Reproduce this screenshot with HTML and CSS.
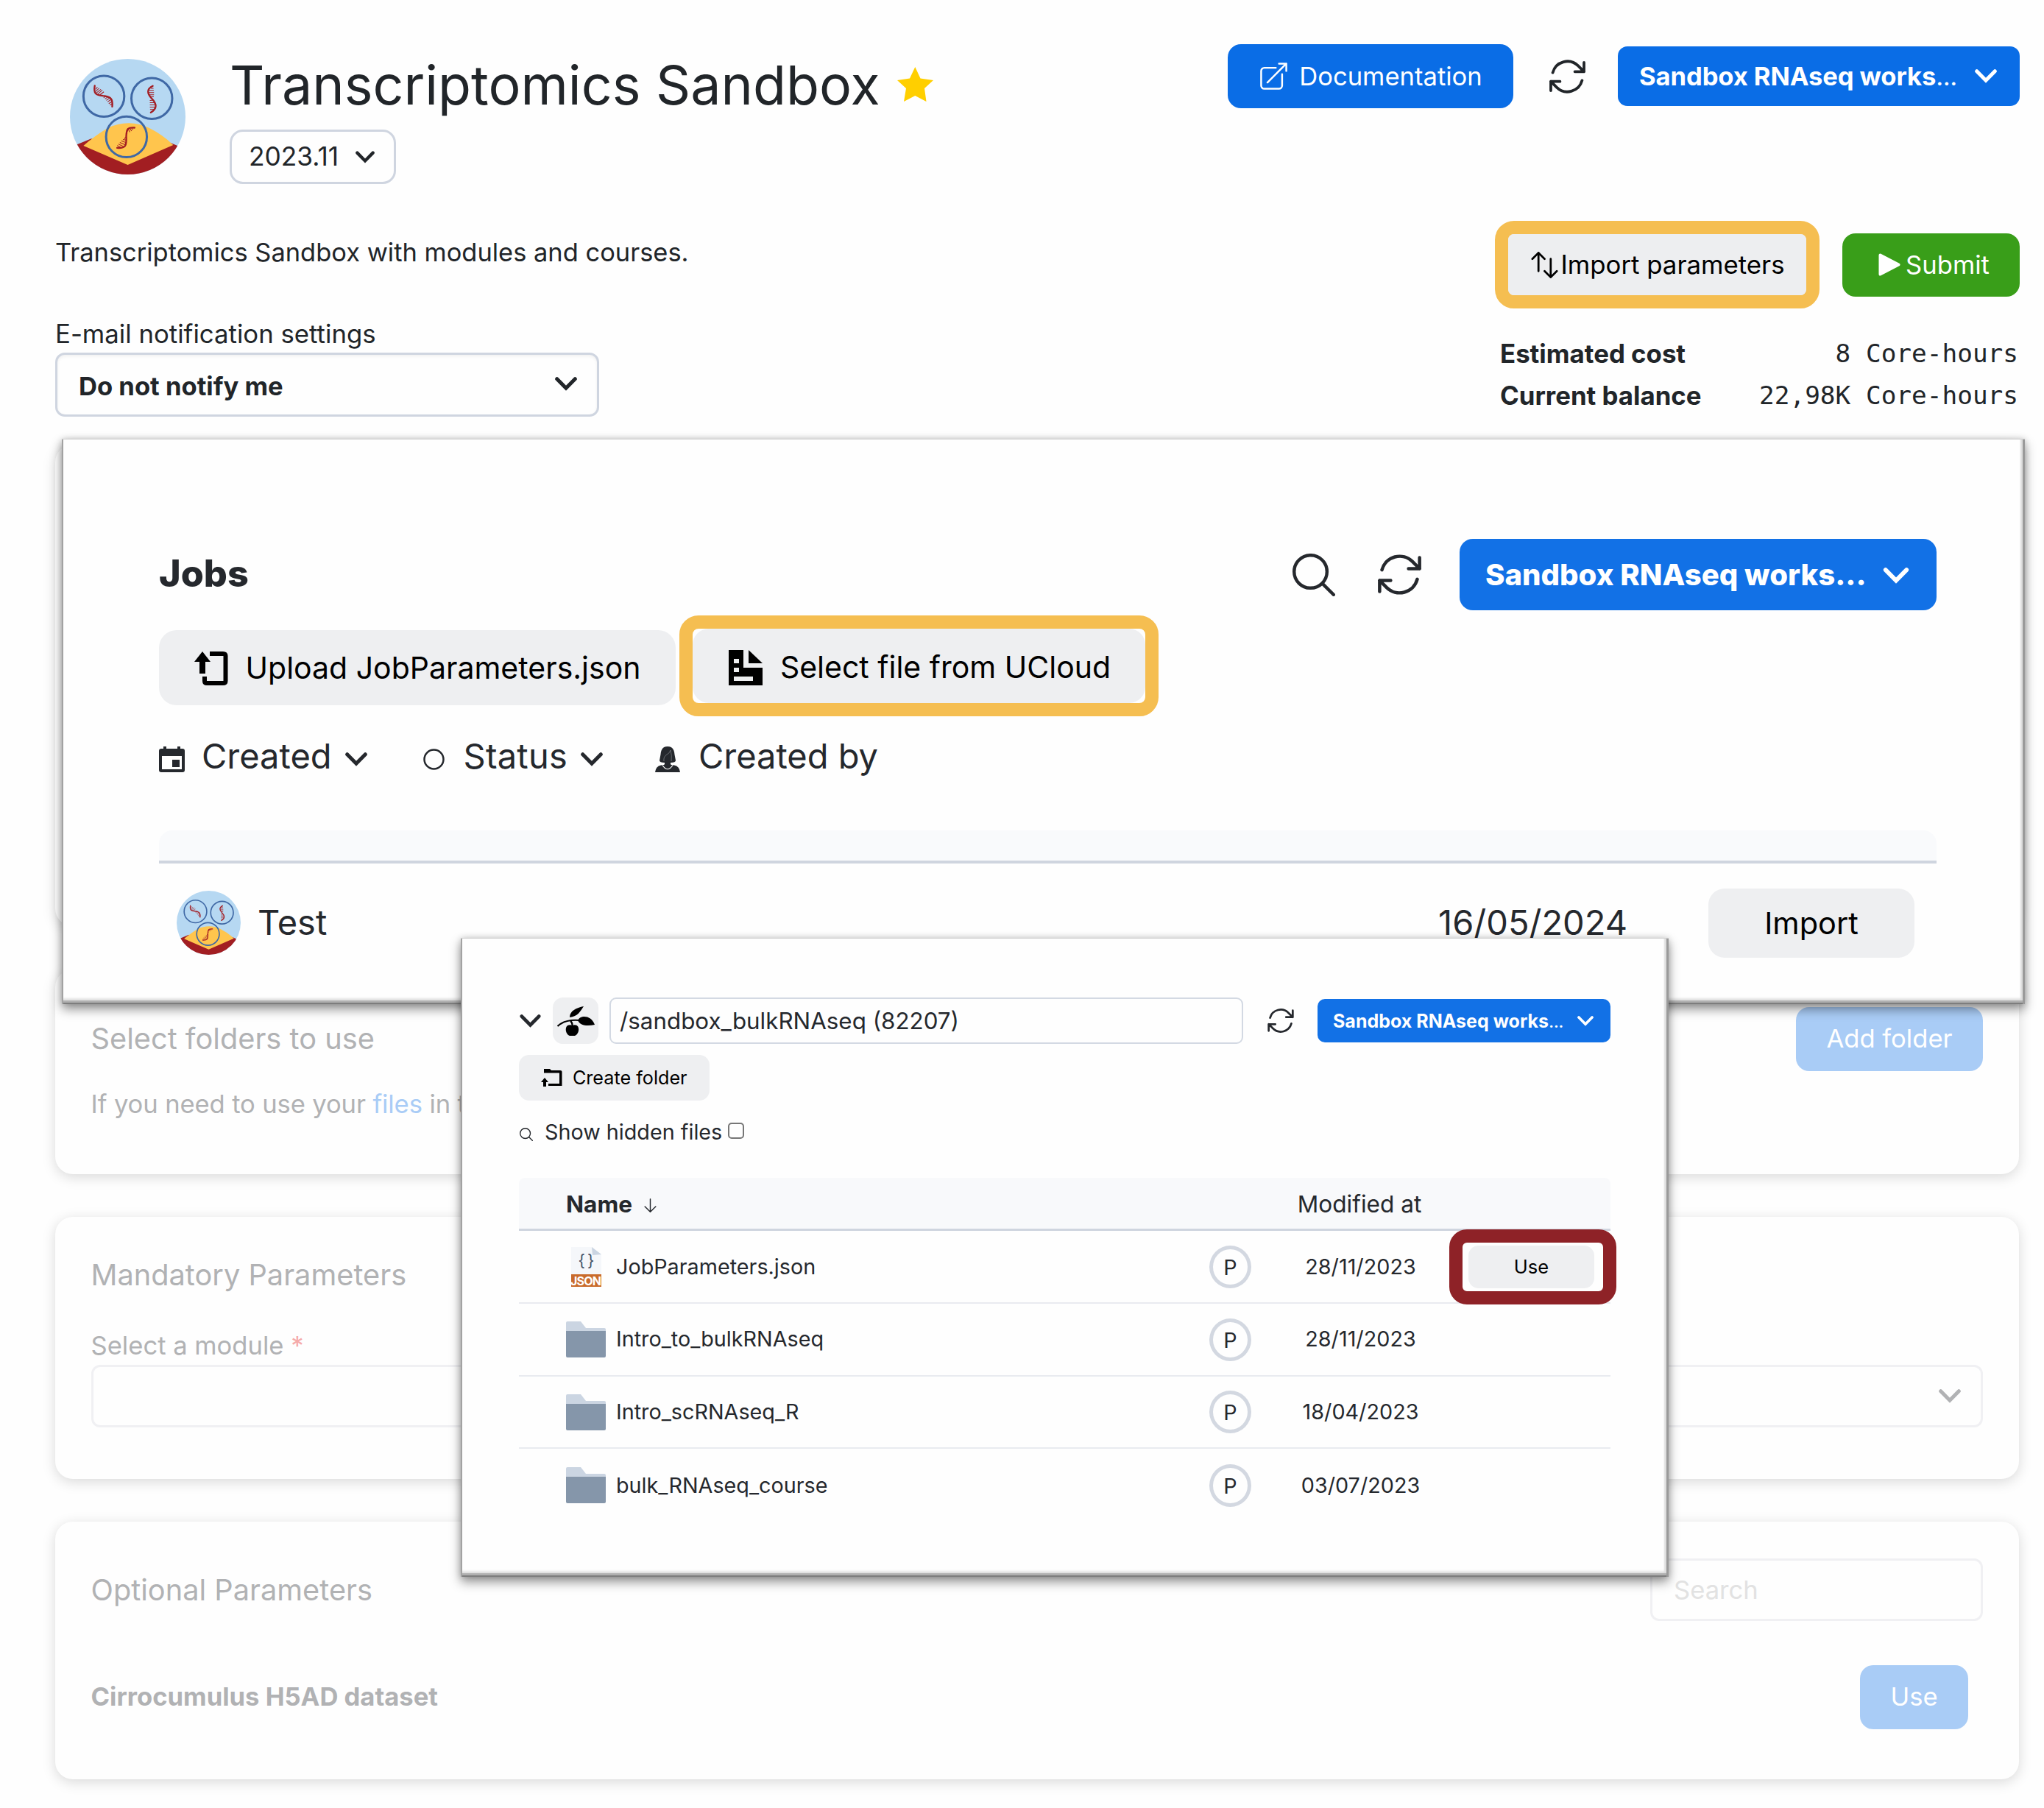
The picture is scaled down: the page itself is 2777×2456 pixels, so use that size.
FILE: index.html
```html
<!DOCTYPE html>
<html lang="en">
<head>
<meta charset="utf-8">
<title>Transcriptomics Sandbox</title>
<link rel="stylesheet" href="styles.css">
</head>
<body>
<svg class="defs" width="0" height="0" aria-hidden="true">
  <symbol id="refresh" viewBox="2.2 2.9 19.6 18.2"><path fill="none" stroke="currentColor" stroke-width="1.5" stroke-linecap="round" stroke-linejoin="round" d="M16.023 9.348h4.992v-.001M2.985 19.644v-4.992m0 0h4.992m-4.993 0l3.181 3.183a8.25 8.25 0 0013.803-3.7M4.031 9.865a8.25 8.25 0 0113.803-3.7l3.181 3.182m0-4.991v4.99"/></symbol>
  <symbol id="search" viewBox="2.25 2.25 19.5 19.5"><path fill="none" stroke="currentColor" stroke-width="1.5" stroke-linecap="round" stroke-linejoin="round" d="M21 21l-5.197-5.197m0 0A7.5 7.5 0 105.196 5.196a7.5 7.5 0 0010.607 10.607z"/></symbol>
  <symbol id="chevron" viewBox="0 0 30 19"><path fill="none" stroke="currentColor" stroke-width="5" stroke-linecap="round" d="M2.7 2.7L15 15.2L27.3 2.7"/></symbol>
  <symbol id="folder" viewBox="0 0 54 49"><path fill="#cbd5e2" d="M0 2Q0 0 2 0H20L27 9H52Q54 9 54 11V16H0Z"/><path fill="#8596aa" d="M0 13H54V47Q54 49 52 49H2Q0 49 0 47Z"/></symbol>
  <symbol id="logo" viewBox="46 30 470 470">
    <clipPath id="disc"><circle cx="281" cy="265" r="235"/></clipPath>
    <g clip-path="url(#disc)">
      <path fill="#b6d8f2" d="M46 30H516V500H46Z"/>
      <path fill="#a21e22" d="M46 390L133 354L281 330L455 371L516 397V500H46Z"/>
      <path fill="#b6d8f2" d="M133 354L200 300H370L455 371L281 380Z"/>
      <path fill="#ffc54d" d="M101 383Q145 345 200 311Q240 291 285 291Q330 291 368 311Q425 340 466 380L281 461Z"/>
    </g>
    <g fill="none" stroke="#3f68a5" stroke-width="9"><circle cx="184" cy="182" r="83"/><circle cx="379" cy="191" r="83"/><circle cx="276" cy="347" r="83"/></g>
    <g fill="none" stroke="#a31d23" stroke-width="7" stroke-linecap="round"><path d="M147 139C141 172 152 177 180 180C208 182 222 190 218 224"/><path d="M383 140C356 153 361 172 378 190C400 213 402 232 375 248"/><path d="M309 310C282 308 276 313 275 345C277 385 272 394 238 392"/></g>
    <path fill="none" stroke="#a31d23" stroke-width="3" d="M150 154l8-9M150 163l15-14M153 169l19-15M159 173l19-16M168 176l16-12M183 188l10-8M189 193l12-9M194 199l15-11M199 205l16-11M204 212l14-9M209 218l10-6M375 150h11M367 158h20M365 167h23M368 176h20M373 184h14M371 199l16-1M371 208h21M371 217h24M371 226h23M372 236h16M277 318l5 6M281 312l9 16M289 311l8 12M297 311l6 7M275 328l4 8M272 348l-4 8M274 360l-12-2M275 371l-20-8M273 380l-24-10M265 387l-22-11M252 390l-14-8"/>
  </symbol>
</svg>

<main class="page">
  <header class="head">
    <div class="brand">
      <svg class="logo"><use href="#logo"/></svg>
      <div class="brand-text">
        <h1>Transcriptomics Sandbox <svg class="star" viewBox="0 0 49 47"><path fill="#ffcf00" d="M24.300 0L31.500 15.500L49 18L37 29L39.500 47L24.300 39L9 47L12 29L0 18L17 15.500Z"/></svg></h1>
        <button class="version">2023.11 <svg class="chev-s"><use href="#chevron"/></svg></button>
      </div>
    </div>
    <div class="actions">
      <button class="btn blue doc"><svg viewBox="2.250 2.250 19.500 19.500"><path fill="none" stroke="#fff" stroke-width="1.300" stroke-linecap="round" stroke-linejoin="round" d="M13.500 6H5.250A2.250 2.250 0 003 8.250v10.500A2.250 2.250 0 005.250 21h10.500A2.250 2.250 0 0018 18.750V10.500m-10.500 6L21 3m0 0h-5.250M21 3v5.250"/></svg>Documentation</button>
      <svg class="refresh"><use href="#refresh"/></svg>
      <button class="btn blue project"><span>Sandbox RNAseq works<i>...</i></span><svg class="chev"><use href="#chevron"/></svg></button>
    </div>
  </header>

  <section class="sub">
    <div>
      <p class="desc">Transcriptomics Sandbox with modules and courses.</p>
      <p class="label">E-mail notification settings</p>
      <div class="select"><b>Do not notify me</b><svg class="chev"><use href="#chevron"/></svg></div>
    </div>
    <div class="side">
      <div class="run">
        <div class="ring"><button class="btn import"><svg viewBox="2.250 2.250 19.500 19.500"><path fill="none" stroke="#000" stroke-width="1.500" stroke-linecap="round" stroke-linejoin="round" d="M3 7.500L7.500 3m0 0L12 7.500M7.500 3v13.500m13.500 0L16.500 21m0 0L12 16.500m4.500 4.500V7.500"/></svg>Import parameters</button></div>
        <button class="btn submit"><svg viewBox="0 0 30 31"><path fill="#fff" stroke="#fff" stroke-width="4" stroke-linejoin="round" d="M2.500 2.500L27.500 15.500L2.500 28.500Z"/></svg>Submit</button>
      </div>
      <dl class="costs">
        <dt>Estimated cost</dt><dd>8 Core-hours</dd>
        <dt>Current balance</dt><dd>22,98K Core-hours</dd>
      </dl>
    </div>
  </section>

  <section class="card c1"></section>
  <section class="card c2">
    <div class="bar"><h2>Select folders to use</h2><button class="btn pale add">Add folder</button></div>
    <p class="hint">If you need to use your <a>files</a> in the job</p>
  </section>
  <section class="card c3">
    <h2>Mandatory Parameters</h2>
    <p class="field">Select a module <em>*</em></p>
    <div class="box"><svg class="chev"><use href="#chevron"/></svg></div>
  </section>
  <section class="card c4">
    <div class="bar"><h2>Optional Parameters</h2><div class="box find">Search</div></div>
    <div class="bar opt"><b>Cirrocumulus H5AD dataset</b><button class="btn pale use">Use</button></div>
  </section>
</main>

<section class="panel jobs">
  <div class="jobs-head">
    <h2>Jobs</h2>
    <svg class="search"><use href="#search"/></svg>
    <svg class="refresh"><use href="#refresh"/></svg>
    <button class="btn project"><span>Sandbox RNAseq works...</span><svg class="chev"><use href="#chevron"/></svg></button>
  </div>
  <div class="sources">
    <button class="btn gray upload"><svg viewBox="0 0 46 46"><path d="M11 0L22 14H15V30H7V14H0Z"/><path fill="none" stroke="#000" stroke-width="6" d="M21 3H39Q42.500 3 42.500 6V40Q42.500 43 39 43H17Q14 43 14 40V34"/></svg>Upload JobParameters.json</button>
    <div class="ring wide"><button class="btn gray"><svg viewBox="0 0 46 48"><path fill-rule="evenodd" d="M0 0H20V24H46V48H0ZM7 12V18H14V12ZM7 24V30H14V24ZM7 36V42H33V36Z"/><path d="M27 0L46 18H27Z"/></svg>Select file from UCloud</button></div>
  </div>
  <div class="filters">
    <svg class="i1" viewBox="0 0 35 35"><path fill="currentColor" fill-rule="evenodd" d="M6 0H10V3H25V0H29V3H32Q35 3 35 6V32Q35 35 32 35H3Q0 35 0 32V6Q0 3 3 3H6ZM4 13V31H31V13ZM18 18H28V28H18Z"/></svg><span>Created</span><svg class="chev"><use href="#chevron"/></svg>
    <svg class="i2" viewBox="0 0 29 29"><circle cx="14.500" cy="14.500" r="13" fill="none" stroke="currentColor" stroke-width="2.500"/></svg><span>Status</span><svg class="chev"><use href="#chevron"/></svg>
    <svg class="i3" viewBox="0 0 34 35"><path fill="currentColor" d="M17 0C10 0 8 5 7.500 11L6 19Q6 22 13 22V24Q13 25 8 25.500Q1 26.500 0 35H34Q33 26.500 26 25.500Q21 25 21 24V22Q28 22 28 19L26.500 11C26 5 24 0 17 0Z"/><path fill="none" stroke="#fefefe" stroke-width="1.200" d="M10 25.500Q17 36 24 25.500"/><path fill="none" stroke="#777b80" stroke-width=".8" d="M12 20Q11 14 16 11Q20 9 21 5Q23 12 22 20"/></svg><span>Created by</span>
  </div>
  <div class="strip"></div>
  <div class="job">
    <svg class="avatar"><use href="#logo"/></svg><span>Test</span><time>16/05/2024</time><button class="btn gray">Import</button>
  </div>
</section>

<section class="panel files">
  <div class="path">
    <svg class="chev"><use href="#chevron"/></svg>
    <button class="btn gray drive"><svg viewBox="0 0 51 40"><path fill="none" stroke="#000" stroke-width="2.200" d="M.5 27C8 20 18 18 30 19M18 20Q21 22 20.500 27"/><path d="M17 15C17 6 26 2 36 0C32 6 28 14 17 15ZM28 19C31 12 46 11 51 25C42 27 31 27 28 19ZM20.500 26C9 22 10 38 17 40H24C31 38 32 22 20.500 26Z"/></svg></button>
    <div class="crumb">/sandbox_bulkRNAseq (82207)</div>
    <svg class="refresh"><use href="#refresh"/></svg>
    <button class="btn project"><span>Sandbox RNAseq works<i>...</i></span><svg class="chev"><use href="#chevron"/></svg></button>
  </div>
  <button class="btn gray create"><svg viewBox="0 0 28.500 24.500"><path d="M5 12L10 18H7V24.500H3V18H0Z"/><path d="M4 0H12L14 2H26Q28.500 2 28.500 4V23H10V20H25V5.500H4Z"/></svg>Create folder</button>
  <div class="hidden-files"><svg><use href="#search"/></svg>Show hidden files<span class="check"></span></div>
  <div class="table">
    <div class="tr th"><div class="name"><b>Name</b><svg class="sort" viewBox="3.700 2.250 16.600 19.500"><path fill="none" stroke="currentColor" stroke-width="1.500" stroke-linecap="round" stroke-linejoin="round" d="M19.500 13.500L12 21m0 0l-7.500-7.500M12 21V3"/></svg></div><div></div><div class="date">Modified at</div></div>
    <div class="tr"><div class="name"><svg class="json" viewBox="0 0 41 54"><path fill="#f5f7fa" d="M0 0H28L41 10V40H0Z"/><path fill="#cbd5e2" d="M28 0L41 10L29 11Z"/><text x="20.500" y="26" text-anchor="middle" font-size="22" fill="#475569" textLength="22">{ }</text><path fill="#c96b2c" d="M0 37H41V54H0Z"/><text x="20" y="51.500" text-anchor="middle" font-size="16" font-weight="700" fill="#fff" textLength="42">JSON</text></svg><span>JobParameters.json</span></div><div class="p">P</div><div class="date">28/11/2023</div><div><button class="btn gray pick">Use</button></div></div>
    <div class="tr"><div class="name"><svg class="dir"><use href="#folder"/></svg><span>Intro_to_bulkRNAseq</span></div><div class="p">P</div><div class="date">28/11/2023</div></div>
    <div class="tr"><div class="name"><svg class="dir"><use href="#folder"/></svg><span>Intro_scRNAseq_R</span></div><div class="p">P</div><div class="date">18/04/2023</div></div>
    <div class="tr"><div class="name"><svg class="dir"><use href="#folder"/></svg><span>bulk_RNAseq_course</span></div><div class="p">P</div><div class="date">03/07/2023</div></div>
  </div>
</section>
</body>
</html>
```
FILE: styles.css
```css
* { box-sizing: border-box; margin: 0; padding: 0; }
body {
  position: relative;
  width: 2777px;
  height: 2456px;
  overflow: hidden;
  background: #fefefe;
  color: #212529;
  font: 400 34.6px/1.2 Inter, "Liberation Sans", sans-serif;
}
svg { display: block; flex: none; }
.defs { position: absolute; }
b { font-weight: 700; }
i { font-style: normal; font-weight: 400; letter-spacing: -.5px; }
button { font: inherit; color: inherit; border: 0; background: none; }
.btn { display: flex; align-items: center; justify-content: center; white-space: nowrap; }
.blue { background: #0a6de6; color: #fff; }
.gray { background: #eeeff1; color: #000; }
.pale { background: #a9ccf6; color: #fff; border-radius: 18px; }
.chev { width: 30px; height: 19px; }

.page { padding: 0 33px 0 75px; }
.head { display: flex; justify-content: space-between; align-items: flex-start; height: 250px; padding-top: 60px; }
.brand { display: flex; }
.logo { width: 157px; height: 157px; margin: 20px 60px 0 20px; }
h1 { display: flex; align-items: center; gap: 23px; margin-top: 11px; font-size: 73.5px; font-weight: 400; line-height: 90px; }
.star { width: 49px; height: 47px; margin-top: -3px; }
.version {
  display: flex; align-items: center; justify-content: space-between;
  width: 226px; height: 74px; margin-top: 15px; padding: 1px 26px 0 23px;
  border: 3px solid #cfd5e0; border-radius: 18px; font-size: 35.3px;
}
.chev-s { width: 26px; height: 17px; }
.actions { display: flex; align-items: center; }
.doc { width: 388px; height: 87px; gap: 16px; border-radius: 18px; padding-left: 2px; }
.doc svg { width: 37px; height: 37px; }
.refresh { width: 49px; height: 46px; }
.actions .refresh { margin: 0 44px 0 49px; }
.project { justify-content: space-between; font-weight: 700; color: #fff; background: #1271e6; }
.actions .project { width: 546px; height: 81px; padding: 0 31px 0 29px; border-radius: 13px; background: #0a6de6; letter-spacing: -.1px; }

.sub { display: flex; justify-content: space-between; height: 354px; }
.desc { margin-top: 63px; line-height: 60px; font-size: 34.45px; }
.label { margin-top: 55px; line-height: 50px; font-size: 34.75px; }
.select {
  display: flex; align-items: center; justify-content: space-between;
  width: 739px; height: 87px; margin-top: 1px; padding: 4px 27px 0 29px;
  border: 3px solid #cfd5e0; border-radius: 13px; box-shadow: inset 0 2px 4px rgba(0,0,0,.06);
}
.select .chev { margin-top: -7px; }
.side { width: 713px; padding-top: 50px; }
.run { display: flex; align-items: center; justify-content: space-between; height: 119px; }
.ring { border: 18px solid #f5be51; border-radius: 26px; background: #fefefe; }
.import { width: 405px; height: 83px; gap: 3px; border-radius: 8px; background: #edeef0; color: #000; font-size: 34.8px; padding-left: 2px; }
.run .ring { background: #edeef0; }
.import svg { width: 37px; height: 36px; }
.submit { width: 241px; height: 86px; gap: 7px; padding-left: 8px; border-radius: 18px; background: #399e19; color: #fff; }
.submit svg { width: 30px; height: 31px; }
.costs { display: grid; grid-template-columns: auto auto; justify-content: space-between; margin-top: 33px; padding: 0 2px 0 7px; line-height: 56.5px; }
dt { font-weight: 700; font-size: 34.8px; }
dd { font-family: "DejaVu Sans Mono", monospace; font-size: 34.4px; text-align: right; }

.card { margin: 0 1px 58.5px 0; padding: 0 49px 0 48.5px; border-radius: 24px; background: #fefefe; box-shadow: 0 4px 18px rgba(0,0,0,.15); color: #b1b2b4; }
.card h2 { font-size: 39.75px; font-weight: 400; line-height: 60px; }
.c1 { height: 654px; }
.c2 { height: 278px; padding-top: 51px; }
.c3 { height: 355.5px; padding-top: 49px; }
.c4 { height: 350px; padding-top: 49px; }
.bar { display: flex; align-items: center; justify-content: space-between; height: 87px; }
.add { width: 254px; height: 87px; }
.hint { margin-top: 22px; line-height: 44px; letter-spacing: -.12px; }
.hint a { color: #a9ccf6; }
.field { margin-top: 43px; line-height: 44px; margin-bottom: 5px; }
.field em { font-style: normal; color: #f5aaaa; }
.box { display: flex; align-items: center; justify-content: flex-end; height: 85px; padding: 0 27px; border: 3px solid #f0f0f3; border-radius: 12px; }
.find { width: 452px; justify-content: flex-start; padding: 0 29px; color: #e2e2e2; }
.opt { margin-top: 58px; padding-right: 20px; }
.use { width: 147px; height: 87px; margin-top: 1px; }

.panel {
  position: absolute;
  background: #fefefe;
  color: #25282d;
  box-shadow:
    inset 0 1px 0 #cfcfcf, inset 2px 0 0 #a2a2a2, inset -3px 0 0 #9a9a9a, inset 0 -2px 0 #7d7d7d,
    inset 0 -5px 1px #b0b0b0, inset -6px 0 2px #dedede, inset 0 -8px 3px #e4e4e4,
    0 7px 14px rgba(0,0,0,.42), 0 0 8px rgba(0,0,0,.15);
}
.jobs { left: 84px; top: 596px; width: 2667px; height: 768px; padding: 136px 120px 0 132px; }
.jobs-head { display: flex; align-items: center; height: 97px; }
.jobs-head h2 { flex: 1; margin-top: -3px; font-size: 50.3px; font-weight: 800; line-height: 60px; }
.search { width: 58px; height: 58px; margin-right: 58px; }
.jobs .refresh { width: 59px; height: 55px; margin-right: 52px; }
.jobs .project { width: 648px; height: 97px; padding: 2px 37px 0 35px; border-radius: 18px; font-size: 40.1px; font-weight: 800; }
.jobs .project .chev { width: 36px; height: 22px; }
.sources { display: flex; align-items: flex-start; gap: 5px; margin-top: 7px; font-size: 41px; }
.upload { width: 702px; height: 102px; margin-top: 20px; gap: 24px; padding: 1px 0 0; border-radius: 24px; }
.upload svg { width: 46px; height: 46px; }
.wide .btn { width: 615px; height: 101px; gap: 24px; padding: 4px 0 0 2px; border-radius: 22px; }
.wide svg { width: 46px; height: 48px; }
.filters { display: flex; align-items: center; margin-top: 24px; height: 60px; font-size: 47px; line-height: 60px; }
.filters svg { margin-top: 9px; }
.filters span { margin-left: 23px; }
.filters .chev { margin-left: 18px; }
.i1 { width: 35px; }
.i2 { width: 29px; margin-left: 76px; }
.i2 + span { margin-left: 26px; letter-spacing: .2px; }
.i3 { width: 34px; margin-left: 71px; }
.i3 + span { margin-left: 25px; }
.strip { height: 45px; margin-top: 71px; border-bottom: 4px solid #cfd5df; border-radius: 18px 18px 0 0; background: #f9fafc; }
.job { display: flex; align-items: center; height: 161px; padding: 0 30px 0 24px; font-size: 47px; }
.avatar { width: 87px; height: 87px; margin-right: 23px; }
.job span { flex: 1; }
.job .btn { width: 280px; height: 94px; margin-left: 110px; padding-top: 2px; border-radius: 22px; font-size: 41.500px; }

.files { left: 626px; top: 1274px; width: 1641px; height: 868px; padding: 81px 79px 0 79px; font-size: 28.75px; }
.path { display: flex; align-items: center; height: 63px; }
.path > .chev { width: 29px; height: 18px; margin: 0 16px 0 1px; }
.drive { width: 62px; height: 63px; border-radius: 14px; }
.drive svg { width: 51px; height: 40px; }
.crumb { width: 861px; height: 63px; margin-left: 15px; padding-left: 12px; border: 2.500px solid #d3d9e3; border-radius: 9px; font-size: 31.350px; line-height: 60px; }
.files .refresh { width: 36px; height: 33px; margin: 0 32px 0 33px; }
.files .project { flex: 1; height: 59px; padding: 0 23px 0 21px; border-radius: 10px; font-size: 25px; }
.files .project .chev { width: 22px; height: 14px; }
.create { width: 259px; height: 62px; margin-top: 15px; gap: 14px; border-radius: 14px; font-size: 25.200px; }
.create svg { width: 28.500px; height: 24.500px; }
.hidden-files { display: flex; align-items: center; height: 40px; margin-top: 23px; padding-left: 1px; }
.hidden-files svg { width: 18px; height: 18px; margin: 6px 16px 0 0; }
.check { width: 22px; height: 22px; margin: -4px 0 0 8px; border: 2px solid #767676; border-radius: 5px; }
.table { margin-top: 42px; }
.tr { display: grid; grid-template-columns: 874px 57px 297px 190px; align-items: center; height: 98.800px; padding: 1px 0 0 64px; border-bottom: 2px solid #e9ebf0; }
.tr:last-child { border: 0; padding: 0 0 0 64px; }
.th { height: 72px; padding-top: 2px; border-bottom: 3px solid #cfd5df; border-radius: 8px 8px 0 0; background: #f8f9fb; font-size: 31.600px; }
.name { display: flex; align-items: center; }
.name span { margin-left: 14px; }
.sort { width: 17px; height: 19px; margin: 4px 0 0 16px; }
.json { width: 41px; height: 54px; margin: 0 6px 0 7px; }
.dir { width: 54px; height: 49px; }
.p { width: 57px; height: 58px; border: 5px solid #d3d8e1; border-radius: 50%; text-align: center; line-height: 49px; }
.date { text-align: center; }
.th .date { margin-left: -3px; }
.pick { position: relative; width: 171px; height: 58px; margin-left: -2px; border-radius: 14px; font-size: 25.500px; }
.pick::after { content: ""; position: absolute; inset: -22px -30px -22px -26px; border: 18px solid #8e2227; border-radius: 24px; }
```
